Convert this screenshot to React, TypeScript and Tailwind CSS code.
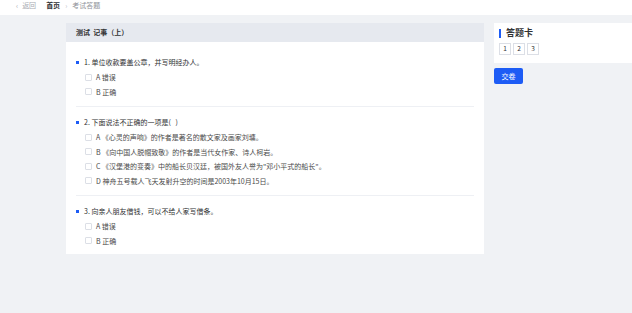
import React from 'react';

type Question = {
  no: number;
  title: string;
  options: string[];
};

const questions: Question[] = [
  { no: 1, title: '单位收款要盖公章，并写明经办人。', options: ['A 错误', 'B 正确'] },
  {
    no: 2,
    title: '下面说法不正确的一项是(\u00a0\u00a0\u00a0)',
    options: [
      'A 《心灵的声响》的作者是著名的散文家及画家刘墉。',
      'B 《向中国人脱帽致敬》的作者是当代女作家、诗人柯岩。',
      'C 《汉堡港的变奏》中的船长贝汉廷，被国外友人誉为"邓小平式的船长"。',
      'D 神舟五号载人飞天发射升空的时间是2003年10月15日。',
    ],
  },
  { no: 3, title: '向亲人朋友借钱，可以不给人家写借条。', options: ['A 错误', 'B 正确'] },
];

const font = { fontFamily: '"Noto Sans CJK SC", "Noto Sans", sans-serif' };

export default function App() {
  return (
    <div className="min-h-[313px] bg-[#f0f2f5] text-[7px]" style={font}>
      {/* Breadcrumb */}
      <div className="h-[15px] bg-white flex items-start pt-[1px] pl-[16px] text-[7px] leading-[9px]">
        <span className="text-[#a8abb2] mr-[4px]">‹</span>
        <span className="text-[#a8abb2]">返回</span>
        <span className="ml-[10px] font-bold text-[#303133]">首页</span>
        <span className="mx-[5px] text-[#c0c4cc]">›</span>
        <span className="text-[#909399]">考试答题</span>
      </div>

      <div className="flex items-start gap-[10px] pl-[66px] pt-[8px]">
        {/* Paper */}
        <div className="w-[418px] bg-white">
          <div className="h-[19px] bg-[#e6e9ef] flex items-center pl-[10px] font-bold text-[#303133] text-[7px]">
            测试&nbsp;&nbsp;记事（上）
          </div>
          <div className="pt-[5px] mx-[10px]">
            {questions.map((q, i) => (
              <div
                key={q.no}
                className={
                  i < questions.length - 1
                    ? 'pt-[8px] pb-[7px] border-b border-[#eef0f4]'
                    : 'pt-[8px] pb-[6px]'
                }
              >
                <div className="h-[15px] flex items-center text-[#303133]">
                  <span className="w-[3px] h-[3px] bg-[#1d5cf5] mr-[5px]" />
                  <span>
                    {q.no}. {q.title}
                  </span>
                </div>
                {q.options.map((opt) => (
                  <div key={opt} className="h-[14.5px] flex items-center pl-[9px] text-[#4a4a4a]">
                    <span className="w-[7px] h-[7px] border border-[#dcdfe6] bg-white rounded-[1px] mr-[4px]" />
                    <span>{opt}</span>
                  </div>
                ))}
              </div>
            ))}
          </div>
        </div>

        {/* Answer card */}
        <div className="flex-1">
          <div className="bg-white pt-[5px] pb-[8px] pl-[5px]">
            <div className="h-[10px] flex items-center">
              <span className="w-[2px] h-[9px] bg-[#1d5cf5] mr-[5px]" />
              <span className="text-[9px] font-bold text-[#303133] leading-[10px]">答题卡</span>
            </div>
            <div className="flex gap-[2px] mt-[5px]">
              {[1, 2, 3].map((n) => (
                <span
                  key={n}
                  className="w-[12px] h-[12px] border border-[#dcdfe6] flex items-center justify-center text-[6.5px] text-[#303133]"
                >
                  {n}
                </span>
              ))}
            </div>
          </div>
          <button className="mt-[5px] w-[29px] h-[16px] bg-[#1d5cf5] text-white rounded-[2px] text-[7px] flex items-center justify-center">
            交卷
          </button>
        </div>
      </div>
    </div>
  );
}
